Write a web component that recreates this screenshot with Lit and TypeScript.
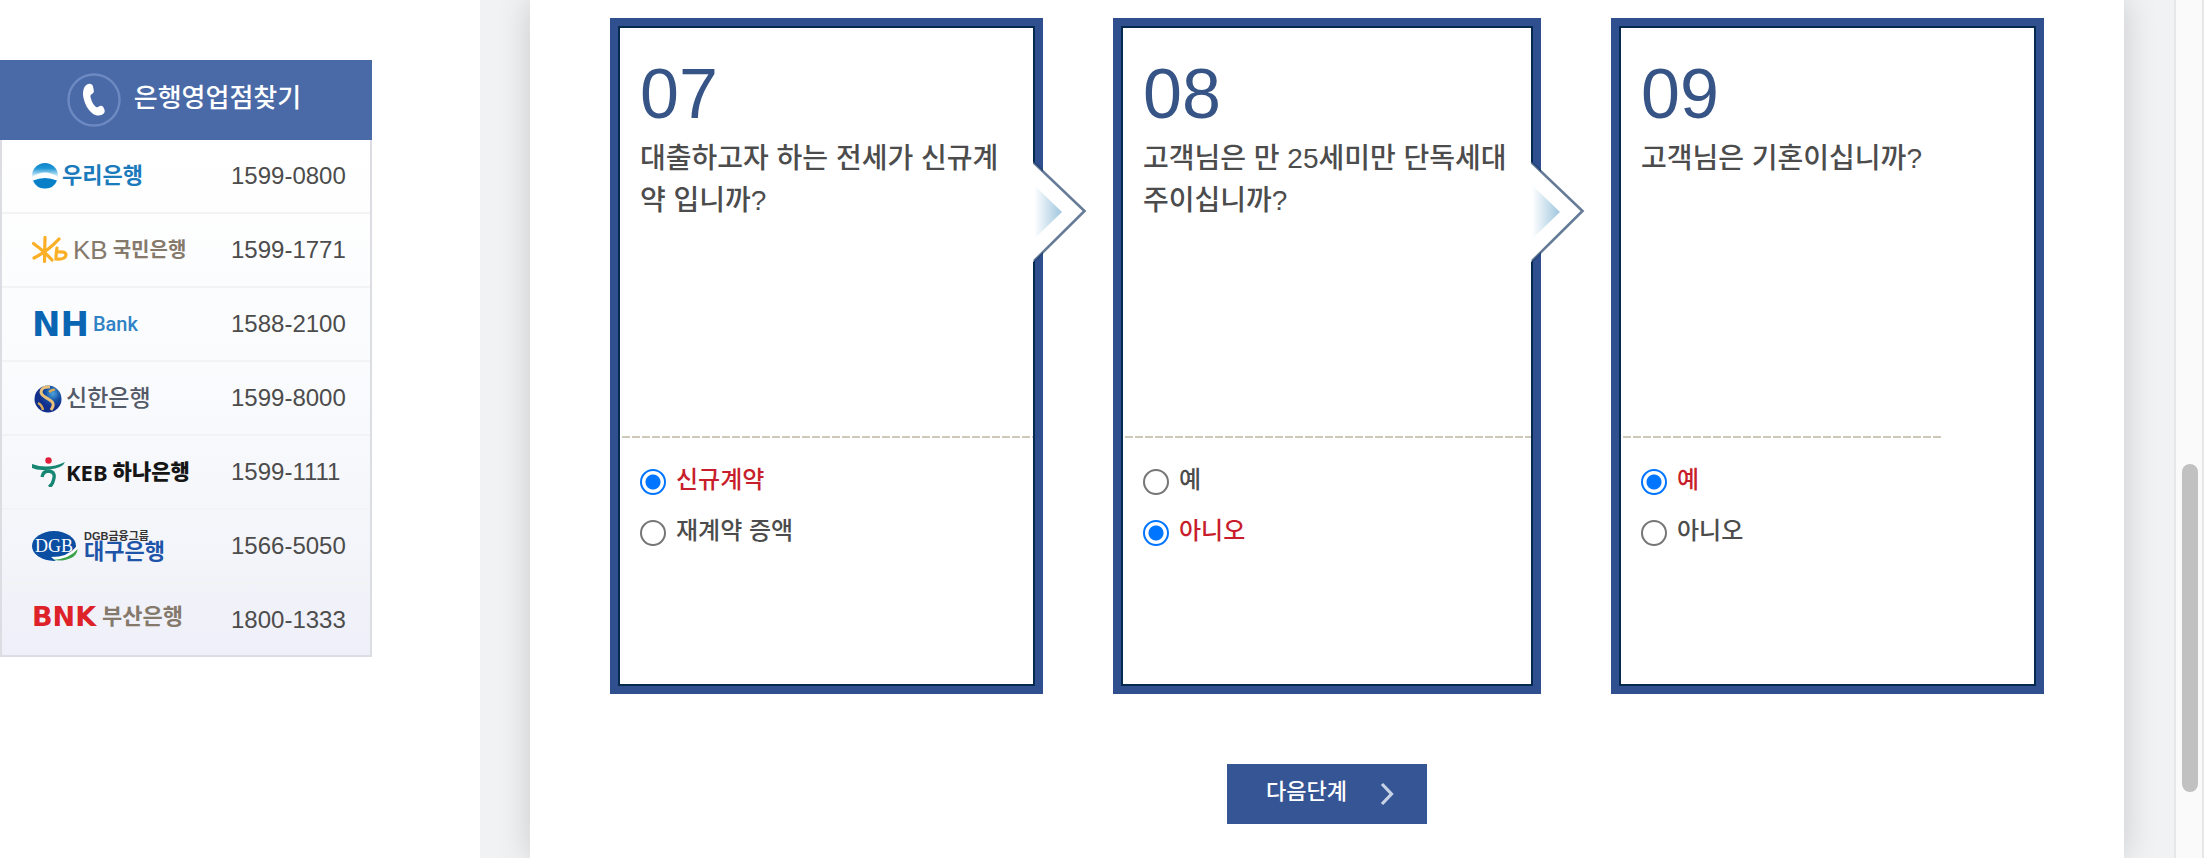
import { LitElement, html, css } from "lit";
import { customElement, property, state } from "lit/decorators.js";
import { classMap } from "lit/directives/class-map.js";

@customElement("bank-directory")
class BankDirectory extends LitElement {
  static styles = css`
    :host { display: block; }
    .title {
      display: flex; align-items: center; justify-content: center; gap: 13px;
      box-sizing: border-box; height: 80px; margin: 0; padding-right: 4px; background: #4a69a7; color: #fff;
      font-size: 26px; font-weight: 500; line-height: 36px;
    }
    .title svg { flex: none; }
    .title span { padding-bottom: 4px; }
    .list {
      list-style: none; margin: 0; padding: 0;
      border: 2px solid #dcdde2; border-top: 0;
      background: linear-gradient(#fff 0%, #fafbfd 45%, #f4f5fa 80%, #eeeff8 100%);
    }
    .row {
      display: grid; grid-template-columns: 199px 1fr; align-items: center;
      height: 72px; padding-left: 30px; border-bottom: 2px solid #f3f3f5;
    }
    .row:last-child { border-bottom: 0; height: 71px; }
    .phone { color: #4c4c4c; font-size: 24px; line-height: 32px; }
    .logo { display: flex; align-items: center; gap: 4px; font-weight: 700; line-height: 32px; white-space: nowrap; }
    .logo svg { flex: none; }
    .woori { color: #1b7abb; font-size: 22px; }
    .kb { color: #85796c; font-size: 20px; gap: 5px; }
    .kb .latin { font: 400 26px/32px "Liberation Sans", sans-serif; }
    .nh { color: #0a66b2; font: 700 34px/32px "DejaVu Sans", sans-serif; }
    .nh .bank { font: 500 20px/32px Roboto, sans-serif; color: #2f83c5; }
    .shinhan { color: #545a68; font-size: 23px; font-weight: 500; }
    .keb { color: #161616; font-size: 21px; gap: 0; font-weight: 900; }
    .keb .latin { font: 700 22px/32px "Noto Sans", sans-serif; margin-right: 5px; }
    .dgb { color: #1e55a8; gap: 6px; }
    .dgb .stack { display: flex; flex-direction: column; }
    .dgb .small { color: #333; font-size: 11px; line-height: 11px; }
    .dgb .large { font-size: 22px; line-height: 20px; }
    .bnk { color: #85796c; font-size: 22px; gap: 6px; padding-bottom: 6px; }
    .bnk .latin { color: #dd2229; font: 700 27px/32px "DejaVu Sans", sans-serif; }
  `;

  render() {
    return html`
      <h2 class="title">
        <svg width="54" height="54" viewBox="0 0 54 54" aria-hidden="true">
          <circle cx="27" cy="27" r="25.500" fill="none" stroke="#6d89c2" stroke-width="2.400" />
          <path fill="#fff" d="M20 11.500c2.500-1.500 5.500-.5 6 2l.8 4c.3 1.800-.6 2.700-2.300 3.700-1.200.8-1.200 2-.8 3.500 1 4 2.500 6.800 5 9 1 .9 2 .7 3.200-.2 1.500-1.200 3-1 4.200.2l1.300 2.800c1 2.300-.1 4.200-2.400 5.300-2.800 1.300-6.500.9-9.500-1.400-4.500-3.500-7.500-9-9-15.500-1.100-5.300-.3-11 3.500-13.400z" />
        </svg>
        <span>은행영업점찾기</span>
      </h2>
      <ul class="list">
        <li class="row">
          <span class="logo woori">
            <svg width="26" height="28" viewBox="0 0 26 28">
              <defs><linearGradient id="wg" x2="0" y2="1"><stop offset="0" stop-color="#0f83c9" /><stop offset=".2" stop-color="#1b95d5" /><stop offset=".5" stop-color="#d8effa" /></linearGradient></defs>
              <circle cx="13" cy="14" r="13" fill="url(#wg)" />
              <path d="M0 15Q13 6 26 15l-1 4Q13 13 1 19z" fill="#fff" />
              <path d="M1 18.500q12-5 24 0A13 13 0 0 1 1 18.500z" fill="#0880c8" />
            </svg><span>우리은행</span></span>
          <span class="phone">1599-0800</span>
        </li>
        <li class="row">
          <span class="logo kb">
            <svg width="36" height="28" viewBox="0 0 36 28" fill="none" stroke="#fbaf24" stroke-width="3.200" stroke-linecap="round">
              <path d="M13 1.500l-.5 24M1.500 7.500Q12 15 20 24M2 22Q16 15 27 3M25 12q-1 5-1 11 9 1 10-4 0-4-8-3" />
            </svg><span class="latin">KB</span><span>국민은행</span></span>
          <span class="phone">1599-1771</span>
        </li>
        <li class="row">
          <span class="logo nh"><span>NH</span><span class="bank">Bank</span></span>
          <span class="phone">1588-2100</span>
        </li>
        <li class="row">
          <span class="logo shinhan">
            <svg width="30" height="30" viewBox="0 0 30 30">
              <defs><radialGradient id="sg" cx=".68" cy=".3"><stop offset="0" stop-color="#4fa4dc" /><stop offset=".55" stop-color="#1450a5" /><stop offset="1" stop-color="#122f8c" /></radialGradient></defs>
              <circle cx="16" cy="16" r="13.500" fill="url(#sg)" />
              <path d="M18 4C9 3 6 10 13 14s11 6 6 13" fill="none" stroke="#e9c07c" stroke-width="3" />
              <path d="M6 20q4 2 5 7M17 9q4-3 6-2" fill="none" stroke="#d8aa58" stroke-width="2.500" />
            </svg><span>신한은행</span></span>
          <span class="phone">1599-8000</span>
        </li>
        <li class="row">
          <span class="logo keb">
            <svg width="34" height="30" viewBox="0 0 34 30">
              <circle cx="16.500" cy="3.500" r="3.200" fill="#e11f3c" />
              <path d="M0 7q16 6 33-2-2 6-16 7.500Q6 14 0 11z" fill="#168672" />
              <path d="M10 20q1-6 7-6 7 1 4.500 9-1 5-4.500 7" fill="none" stroke="#168672" stroke-width="3.400" />
            </svg><span class="latin">KEB</span><span>하나은행</span></span>
          <span class="phone">1599-1111</span>
        </li>
        <li class="row">
          <span class="logo dgb">
            <svg width="46" height="32" viewBox="0 0 46 32">
              <ellipse cx="22" cy="16" rx="22" ry="15" fill="#0c4ea2" />
              <path d="M19 27Q36 27 44 17q3 0 1 5-6 8-21 9z" fill="#fff" />
              <path d="M20 30Q38 29 45.500 19q0 9-15 11.500z" fill="#3ca34a" />
              <text x="22" y="22" text-anchor="middle" font-family="Liberation Serif" font-weight="400" font-size="18" fill="#fff">DGB</text>
            </svg>
            <span class="stack"><span class="small">DGB금융그룹</span><span class="large">대구은행</span></span></span>
          <span class="phone">1566-5050</span>
        </li>
        <li class="row">
          <span class="logo bnk"><span class="latin">BNK</span><span>부산은행</span></span>
          <span class="phone">1800-1333</span>
        </li>
      </ul>
    `;
  }
}

@customElement("question-card")
class QuestionCard extends LitElement {
  @property() number = "";
  @property() question = "";
  @property({ type: Array }) options: string[] = [];
  @property({ type: Boolean }) next = false;
  @property({ type: Number }) initial = 0;
  @state() private picked = -1;

  static styles = css`
    :host { display: block; }
    .card {
      position: relative; box-sizing: border-box; height: 100%; min-height: 676px;
      border: 8px solid #2f4f8f; background: #fff; box-shadow: inset 0 0 0 2px #052a50;
      padding: 32px 2px 2px;
    }
    .group { border: 0; margin: 0; padding: 0; min-width: 0; }
    .legend { width: 100%; min-height: 378px; box-sizing: border-box; padding: 0 20px; }
    .number { display: block; color: #375487; font-size: 70px; line-height: 72px; margin-bottom: 8px; }
    .question { display: block; color: #4c4c4c; font-size: 28px; font-weight: 500; line-height: 42px; }
    .question { font-family: "Liberation Sans", "Noto Sans CJK KR", sans-serif; }
    .rule { height: 2px; margin-left: 2px; background: repeating-linear-gradient(90deg, #cdc8b8 0 8px, transparent 8px 10px); }
    .rule.short { max-width: 318px; }
    .options { display: flex; flex-direction: column; gap: 15px; padding: 24px 20px 0; }
    .option { display: flex; align-items: center; gap: 10px; color: #4c4c4c; font-size: 24px; font-weight: 500; line-height: 36px; }
    .option.on { color: #c81e2b; }
    .radio {
      appearance: none; flex: none; box-sizing: border-box; width: 26px; height: 26px; margin: 4px 0 0;
      border: 2px solid #767676; border-radius: 50%; background: #fff;
    }
    .radio:checked { border-color: #0075ff; background: radial-gradient(circle, #0075ff 0 7px, #fff 8px); }
    .arrow { position: absolute; top: 134px; right: -52px; }
  `;

  render() {
    const active = this.picked < 0 ? this.initial : this.picked;
    return html`
      <div class="card">
        <fieldset class="group">
          <legend class="legend">
            <span class="number">${this.number}</span>
            <span class="question">${this.question}</span>
          </legend>
          <div class=${classMap({ rule: true, short: !this.next })}></div>
          <div class="options">
            ${this.options.map((text, i) => html`
              <label class=${classMap({ option: true, on: i === active })}>
                <input class="radio" type="radio" name="answer" .checked=${i === active} @change=${() => (this.picked = i)} />
                <span>${text}</span>
              </label>`)}
          </div>
        </fieldset>
        ${this.next ? html`
          <svg class="arrow" width="54" height="104" viewBox="0 0 54 104" aria-hidden="true">
            <defs><linearGradient id="ag"><stop offset="0" stop-color="#fff" /><stop offset="1" stop-color="#9fc6de" /></linearGradient></defs>
            <path d="M0 2L51 51 0 102z" fill="#fff" />
            <path d="M1 25L29 52 1 79z" fill="url(#ag)" />
            <path d="M0 2L51.500 51 1 101" fill="none" stroke="#1d3d66" stroke-opacity=".68" stroke-width="2.600" />
          </svg>` : null}
      </div>
    `;
  }
}

const questions = [
  { number: "07", question: "대출하고자 하는 전세가 신규계약 입니까?", options: ["신규계약", "재계약 증액"], initial: 0 },
  { number: "08", question: "고객님은 만 25세미만 단독세대주이십니까?", options: ["예", "아니오"], initial: 1 },
  { number: "09", question: "고객님은 기혼이십니까?", options: ["예", "아니오"], initial: 0 },
];

@customElement("app-root")
class AppRoot extends LitElement {
  static styles = css`
    :host {
      display: grid; grid-template-columns: 480px 1fr 30px; min-height: 100vh;
      background: #fff; font-family: "Liberation Sans", "Noto Sans CJK KR", sans-serif;
    }
    .side { padding: 60px 108px 0 0; }
    .stage { display: flex; padding: 0 50px; background: #f1f2f4; overflow: hidden; }
    .panel { flex: 1; box-sizing: border-box; padding: 18px 80px 32px; background: #fff; box-shadow: 0 0 32px rgba(0, 0, 0, 0.17); }
    .cards { display: grid; grid-template-columns: 433fr 428fr 433fr; gap: 70px; }
    .actions { display: flex; justify-content: center; padding-top: 70px; }
    .next {
      display: flex; align-items: center; justify-content: space-between; width: 200px; height: 60px;
      padding: 0 33px 0 39px; border: 0; background: #365595; color: #fff;
      font-family: inherit; font-size: 22px; font-weight: 500; line-height: 32px;
    }
    .next span { padding-bottom: 4px; }
    .track { box-sizing: border-box; padding: 464px 4px 0 6px; background: #fafafa; border: solid #e7e7e7; border-width: 0 2px; }
    .thumb { height: 328px; border-radius: 8px; background: #c1c1c1; }
  `;

  render() {
    return html`
      <aside class="side"><bank-directory></bank-directory></aside>
      <main class="stage">
        <form class="panel" @submit=${(e: Event) => e.preventDefault()}>
          <div class="cards">
            ${questions.map((q, i) => html`
              <question-card .number=${q.number} .question=${q.question} .options=${q.options}
                .initial=${q.initial} .next=${i < questions.length - 1}></question-card>`)}
          </div>
          <div class="actions">
            <button class="next" type="submit">
              <span>다음단계</span>
              <svg width="14" height="24" viewBox="0 0 14 24" aria-hidden="true">
                <path d="M2 2l9.500 10L2 22" fill="none" stroke="#c8d2e6" stroke-width="3.200" />
              </svg>
            </button>
          </div>
        </form>
      </main>
      <div class="track"><div class="thumb"></div></div>
    `;
  }
}
